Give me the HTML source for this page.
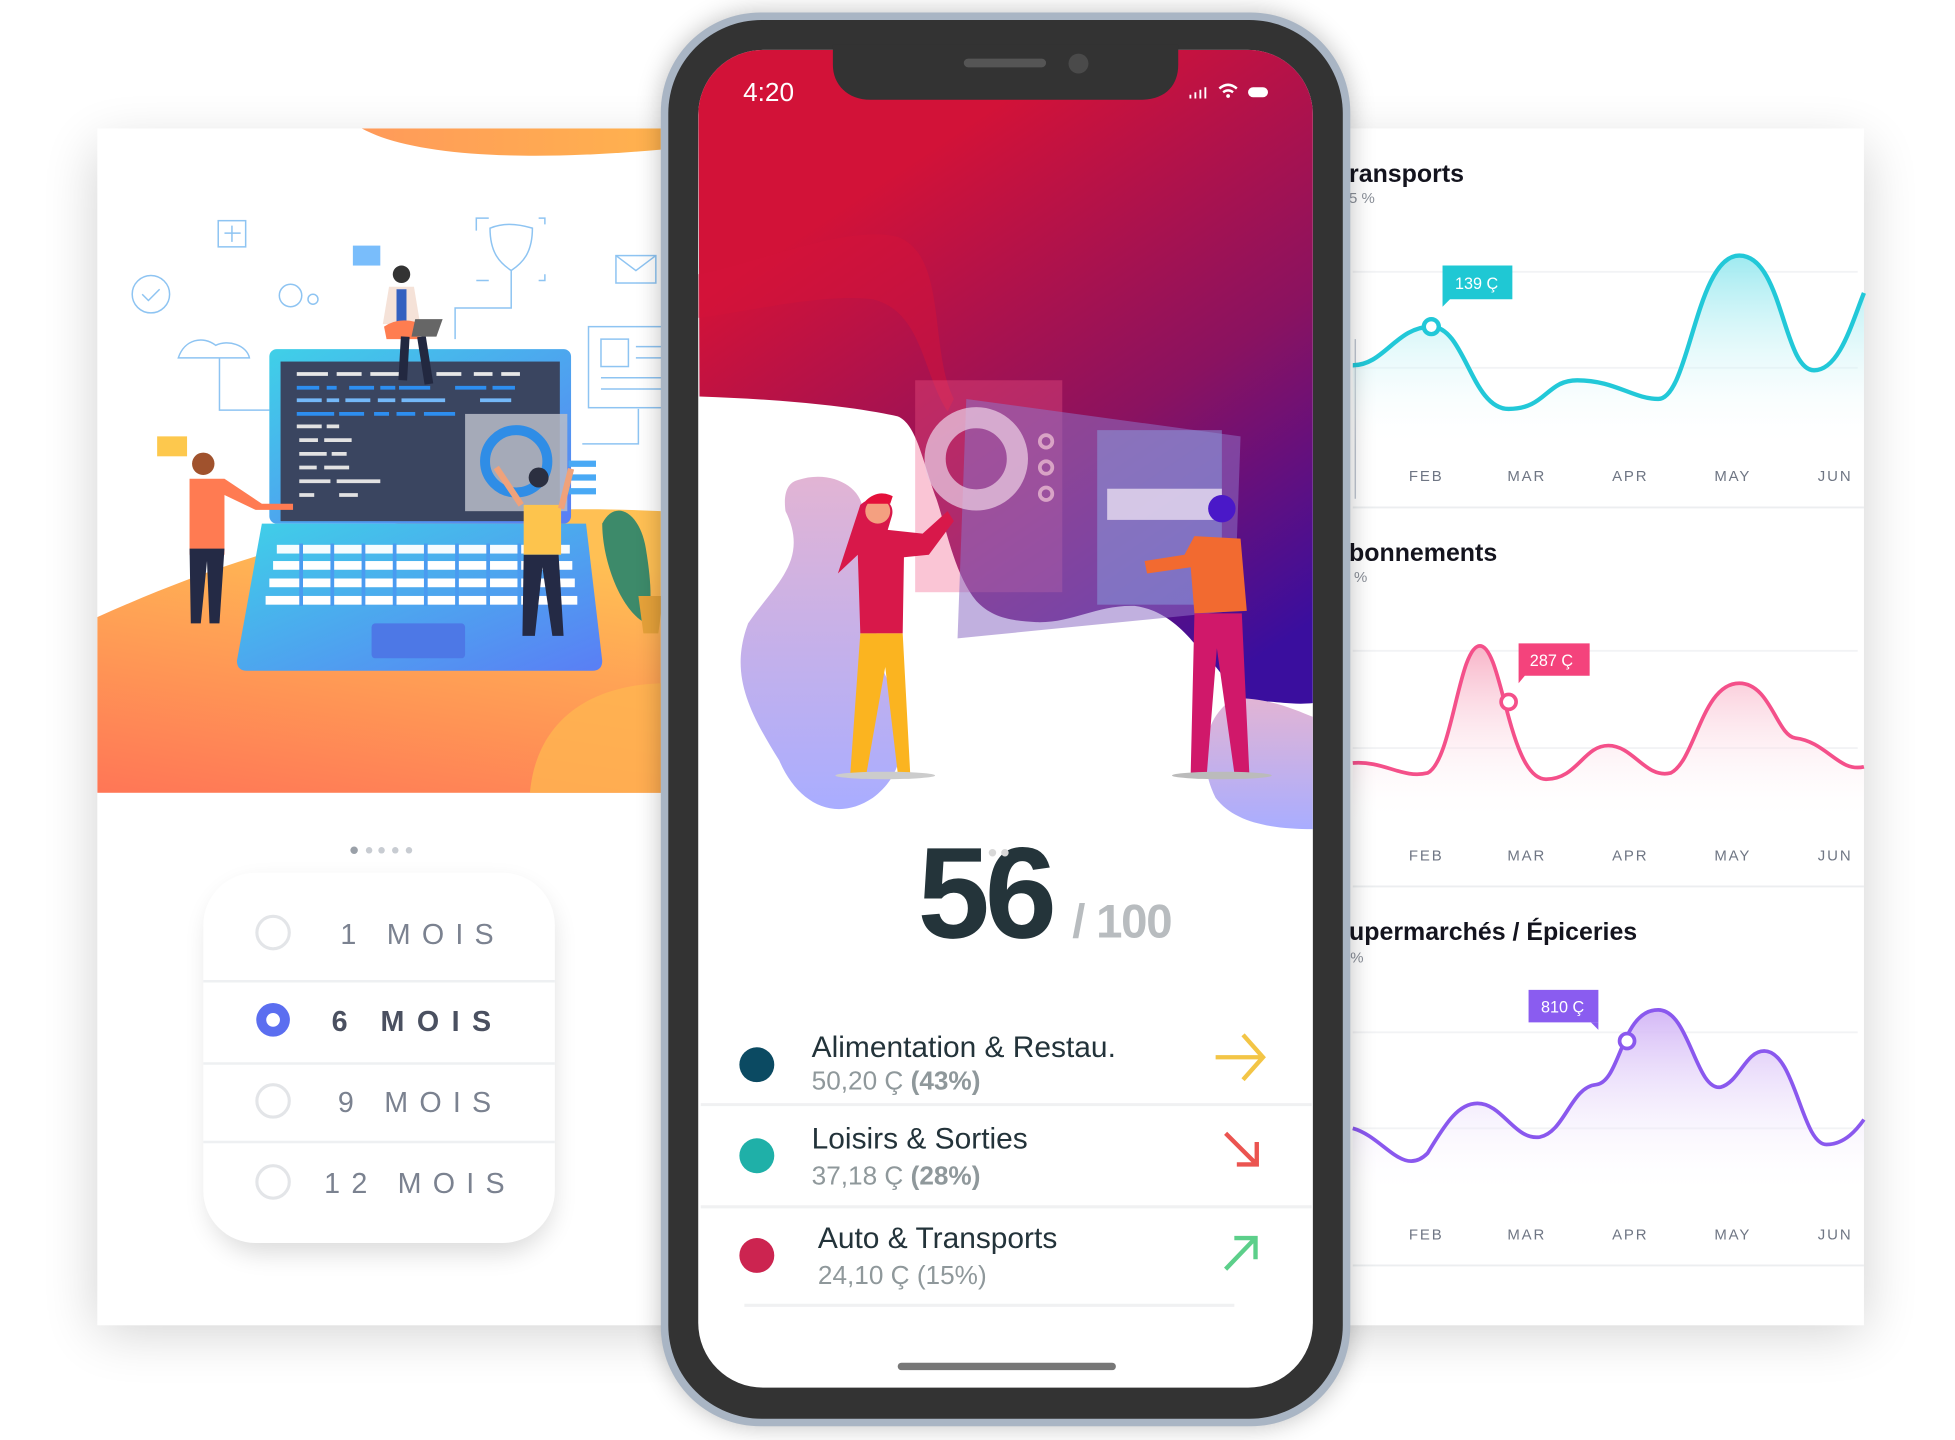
<!DOCTYPE html>
<html><head><meta charset="utf-8"><style>
html,body{margin:0;padding:0;background:#fff;width:1955px;height:1440px;overflow:hidden}
svg{display:block}
text{font-family:"Liberation Sans",sans-serif}
</style></head><body>
<svg width="1955" height="1440" viewBox="0 0 1568 1155" xmlns="http://www.w3.org/2000/svg">
<defs>
<filter id="sh" x="-10%" y="-10%" width="120%" height="125%"><feGaussianBlur stdDeviation="22"/></filter>
<filter id="sh2" x="-20%" y="-20%" width="140%" height="140%"><feGaussianBlur stdDeviation="10"/></filter>
<linearGradient id="org" x1="0" y1="1" x2="0.3" y2="0"><stop offset="0" stop-color="#ff7656"/><stop offset="1" stop-color="#ffc054"/></linearGradient>
<linearGradient id="org2" x1="0" y1="0" x2="1" y2="0"><stop offset="0" stop-color="#ff9a5a"/><stop offset="1" stop-color="#ffb24e"/></linearGradient>
<linearGradient id="lap" x1="0" y1="0" x2="1" y2="1"><stop offset="0" stop-color="#3fd0e8"/><stop offset="1" stop-color="#5a7ef5"/></linearGradient>
<linearGradient id="red" x1="0.3" y1="0.2" x2="0.8" y2="1"><stop offset="0" stop-color="#d21238"/><stop offset="0.55" stop-color="#8a1260"/><stop offset="1" stop-color="#3a0e9e"/></linearGradient>
<linearGradient id="lav" x1="0" y1="0" x2="0" y2="1"><stop offset="0" stop-color="#e2b4d4"/><stop offset="1" stop-color="#a9adff"/></linearGradient>
<linearGradient id="cy" x1="0" y1="0" x2="0" y2="1"><stop offset="0" stop-color="#9eeaf0"/><stop offset="1" stop-color="#ffffff" stop-opacity="0"/></linearGradient>
<linearGradient id="pk" x1="0" y1="0" x2="0" y2="1"><stop offset="0" stop-color="#f8b4c8"/><stop offset="1" stop-color="#ffffff" stop-opacity="0"/></linearGradient>
<linearGradient id="pu" x1="0" y1="0" x2="0" y2="1"><stop offset="0" stop-color="#d4b8f6"/><stop offset="1" stop-color="#ffffff" stop-opacity="0"/></linearGradient>
<clipPath id="scr"><rect x="560" y="40" width="493" height="1073" rx="52"/></clipPath>
<clipPath id="lft"><rect x="78" y="103" width="460" height="533"/></clipPath>
</defs>

<rect x="78" y="118" width="1417" height="950" fill="#000" opacity="0.18" filter="url(#sh)"/>
<rect x="78" y="103" width="1417" height="960" fill="#fff"/>

<g clip-path="url(#lft)">
<path d="M290,103 C330,125 420,130 530,120 V103 Z" fill="url(#org2)"/>
<path d="M78,495 C200,440 330,400 530,410 V636 H78 Z" fill="url(#org)"/>
<path d="M425,636 C430,580 470,550 530,548 V636 Z" fill="#ffb550" opacity="0.8"/>
<g fill="none" stroke="#8ec4f2" stroke-width="1.2">
<rect x="175" y="177" width="22" height="21"/><path d="M186,181 v13 M180,187 h13"/>
<circle cx="121" cy="236" r="15"/><path d="M114,236 l5,5 l9,-9"/>
<circle cx="233" cy="237" r="9"/><circle cx="251" cy="240" r="4"/>
<path d="M143,287 c5,-15 20,-18 30,-10 c10,-5 25,0 27,10 z"/><path d="M176,287 v42 h40"/>
<path d="M382,175 v50 h55 v-50 z" stroke-dasharray="10 40"/>
<path d="M393,183 c10,-4 20,-4 34,0 c0,20 -8,28 -17,34 c-9,-6 -17,-14 -17,-34 z"/><path d="M410,217 v30 h-45 v25"/>
<rect x="494" y="205" width="32" height="22"/><path d="M494,205 l16,12 l16,-12"/>
<rect x="472" y="262" width="70" height="65"/><rect x="482" y="272" width="22" height="22"/><path d="M482,303 h50 M482,312 h50 M510,278 h25 M510,287 h25"/>
<path d="M512,328 v28 h-45"/>
</g>
<rect x="283" y="197" width="22" height="16" fill="#79bdfb"/>
<rect x="126" y="350" width="24" height="16" fill="#fdc84d"/>
<rect x="216" y="280" width="242" height="140" rx="6" fill="url(#lap)"/>
<rect x="225" y="290" width="224" height="128" fill="#3a4560"/>
<g stroke-width="3">
<path d="M238,300h25M270,300h20M297,300h28M350,300h20M380,300h15M402,300h15" stroke="#e8e8e8"/>
<path d="M238,311h18M262,311h8M280,311h20M305,311h12M320,311h25M365,311h25M395,311h18" stroke="#2d8ef0"/>
<path d="M238,321h20M262,321h10M277,321h20M303,321h14M322,321h35M385,321h25" stroke="#74b8f8"/>
<path d="M238,332h30M272,332h20M300,332h12M318,332h15M340,332h25" stroke="#2d8ef0"/>
<path d="M238,342h20M262,342h10M240,353h15M260,353h22M240,364h22M266,364h12M240,375h14M260,375h20M240,386h25M270,386h35M240,397h12M272,397h15" stroke="#e2e2e2"/>
</g>
<rect x="373" y="332" width="82" height="78" fill="#b8bcc8" opacity="0.85"/>
<circle cx="414" cy="370" r="25" fill="none" stroke="#2f8de6" stroke-width="8"/>
<path d="M456,372h22M456,383h22M456,394h22" stroke="#49a9f5" stroke-width="5"/>
<path d="M210,420 H470 L483,530 Q483,538 475,538 H198 Q190,538 190,530 Z" fill="url(#lap)"/>
<g fill="#fff">
<rect x="222" y="437" width="235" height="7" opacity="0.95"/>
<rect x="219" y="450" width="240" height="7"/>
<rect x="216" y="464" width="245" height="7"/>
<rect x="213" y="478" width="250" height="7"/>
</g>
<g fill="#4a9bf0"><rect x="240" y="436" width="3" height="50"/><rect x="265" y="436" width="3" height="50"/><rect x="290" y="436" width="3" height="50"/><rect x="315" y="436" width="3" height="50"/><rect x="340" y="436" width="3" height="50"/><rect x="365" y="436" width="3" height="50"/><rect x="390" y="436" width="3" height="50"/><rect x="415" y="436" width="3" height="50"/><rect x="440" y="436" width="3" height="50"/></g>
<rect x="298" y="500" width="75" height="28" rx="3" fill="#4d78e6"/>
<path d="M152,384 h28 l30,20 h25 v5 h-30 l-25,-12 v48 h-28 z" fill="#ff7b52"/>
<circle cx="163" cy="372" r="9" fill="#a0522d"/>
<path d="M152,440 h28 l-4,60 h-8 l-2,-50 l-5,50 h-8 z" fill="#242a45"/>
<path d="M420,405 h30 v40 h-30 z" fill="#fdc44d"/><circle cx="432" cy="383" r="8" fill="#2b2f40"/>
<path d="M420,445 h28 l4,65 h-9 l-8,-55 l-6,55 h-10 z" fill="#242a45"/>
<path d="M418,405 l-20,-30 M450,408 l8,-32" stroke="#f0a27a" stroke-width="5"/>
<circle cx="322" cy="220" r="7" fill="#333"/><path d="M312,230 h20 l5,30 h-30 z" fill="#f5e2d8"/><path d="M318,232 h8 v26 h-8z" fill="#3360c0"/>
<path d="M308,262 q15,-10 35,0 l-8,10 h-25 z" fill="#ff7d50"/><path d="M325,270 l-2,35 M338,270 l6,38" stroke="#222840" stroke-width="7"/>
<path d="M330,270 l20,0 l5,-14 h-22 z" fill="#666"/>
<path d="M483,420 c10,-20 30,-10 35,20 c5,30 5,50 0,60 c-20,-10 -35,-50 -35,-80z" fill="#3d8a6a"/>
<path d="M512,478 h20 l-4,30 h-12 z" fill="#e6a23a"/>
</g>

<g fill="#c8ccd2"><circle cx="284" cy="682" r="3" fill="#9aa0a8"/><circle cx="296" cy="682" r="2.6"/><circle cx="306" cy="682" r="2.6"/><circle cx="317" cy="682" r="2.6"/><circle cx="328" cy="682" r="2.6"/></g>
<rect x="168" y="710" width="275" height="295" rx="42" fill="#000" opacity="0.14" filter="url(#sh2)"/>
<rect x="163" y="700" width="282" height="297" rx="42" fill="#fff"/>
<g stroke="#eef0f2" stroke-width="2"><path d="M163,787H445M163,853H445M163,916H445"/></g>
<g fill="none" stroke="#e3e5e8" stroke-width="2.5"><circle cx="219" cy="748" r="13"/><circle cx="219" cy="883" r="13"/><circle cx="219" cy="948" r="13"/></g>
<circle cx="219" cy="818" r="13.5" fill="#5b6ef0"/><circle cx="219" cy="818" r="5.5" fill="#fff"/>
<g font-size="23" fill="#7b8290" letter-spacing="9"><text x="273" y="757">1 MOIS</text><text x="271" y="892">9 MOIS</text><text x="260" y="957">12 MOIS</text></g>
<text x="266" y="827" font-size="23" font-weight="bold" fill="#4a5060" letter-spacing="10">6 MOIS</text>

<g fill="#14141e" font-size="20" font-weight="bold"><text x="1082" y="146">ransports</text><text x="1082" y="450">bonnements</text><text x="1082" y="754">upermarchés / Épiceries</text></g>
<g fill="#8a8f98" font-size="12"><text x="1082" y="163">5 %</text><text x="1086" y="467">%</text><text x="1083" y="772">%</text></g>
<g stroke="#f2f3f5" stroke-width="1.5"><path d="M1085,218H1490M1085,295H1490M1085,522H1490M1085,600H1490M1085,828H1490M1085,905H1490"/><path d="M1085,407H1495M1085,711H1495M1085,1015H1495" stroke="#eceef0"/></g>
<path d="M1087,272 V400" stroke="#b8c0cc" stroke-width="1"/>
<g font-size="12" fill="#6f7684" letter-spacing="1.5"><text x="1130" y="386">FEB</text><text x="1209" y="386">MAR</text><text x="1293" y="386">APR</text><text x="1375" y="386">MAY</text><text x="1458" y="386">JUN</text>
<text x="1130" y="690">FEB</text><text x="1209" y="690">MAR</text><text x="1293" y="690">APR</text><text x="1375" y="690">MAY</text><text x="1458" y="690">JUN</text>
<text x="1130" y="994">FEB</text><text x="1209" y="994">MAR</text><text x="1293" y="994">APR</text><text x="1375" y="994">MAY</text><text x="1458" y="994">JUN</text></g>
<path id="c1" d="M1085,293 C1110,293 1120,262 1148,262 C1175,262 1180,328 1210,328 C1240,328 1240,305 1265,305 C1295,305 1310,320 1330,320 C1355,320 1360,205 1395,205 C1430,205 1430,297 1455,297 C1475,297 1485,260 1495,235" fill="none"/>
<path d="M1085,293 C1110,293 1120,262 1148,262 C1175,262 1180,328 1210,328 C1240,328 1240,305 1265,305 C1295,305 1310,320 1330,320 C1355,320 1360,205 1395,205 C1430,205 1430,297 1455,297 C1475,297 1485,260 1495,235 V360 H1085Z" fill="url(#cy)"/>
<use href="#c1" stroke="#22c8d8" stroke-width="3.5"/>
<circle cx="1148" cy="262" r="6" fill="#fff" stroke="#22c8d8" stroke-width="3.5"/>
<path d="M1157,213 h56 v27 h-50 l-6,6 z" fill="#1fc8d4"/><text x="1167" y="232" font-size="13" fill="#fff">139 Ç</text>
<path d="M1085,612 C1110,610 1125,625 1145,620 C1165,610 1170,518 1187,518 C1205,518 1210,625 1240,625 C1265,625 1270,598 1290,598 C1310,598 1320,625 1340,620 C1360,610 1365,548 1395,548 C1420,548 1425,590 1440,592 C1465,595 1475,620 1495,615 V660 H1085Z" fill="url(#pk)"/>
<path d="M1085,612 C1110,610 1125,625 1145,620 C1165,610 1170,518 1187,518 C1205,518 1210,625 1240,625 C1265,625 1270,598 1290,598 C1310,598 1320,625 1340,620 C1360,610 1365,548 1395,548 C1420,548 1425,590 1440,592 C1465,595 1475,620 1495,615" fill="none" stroke="#f4508a" stroke-width="3"/>
<circle cx="1210" cy="563" r="6" fill="#fff" stroke="#f4508a" stroke-width="3"/>
<path d="M1218,516 h57 v26 h-52 l-5,6 z" fill="#f4437c"/><text x="1227" y="534" font-size="13" fill="#fff">287 Ç</text>
<path d="M1085,905 C1110,912 1125,945 1145,925 C1160,900 1170,885 1185,885 C1205,885 1215,915 1235,912 C1255,908 1260,872 1280,870 C1300,868 1300,810 1330,810 C1355,810 1360,875 1380,872 C1395,868 1400,843 1415,843 C1440,843 1445,918 1465,918 C1480,918 1490,905 1495,898 V960 H1085Z" fill="url(#pu)"/>
<path d="M1085,905 C1110,912 1125,945 1145,925 C1160,900 1170,885 1185,885 C1205,885 1215,915 1235,912 C1255,908 1260,872 1280,870 C1300,868 1300,810 1330,810 C1355,810 1360,875 1380,872 C1395,868 1400,843 1415,843 C1440,843 1445,918 1465,918 C1480,918 1490,905 1495,898" fill="none" stroke="#8a58ee" stroke-width="3"/>
<circle cx="1305" cy="835" r="6" fill="#fff" stroke="#8a58ee" stroke-width="3"/>
<path d="M1226,794 h56 v26 h-52 l-4,-0 z" fill="#8a5cf0"/><path d="M1276,820 l6,6 v-6z" fill="#8a5cf0"/><text x="1236" y="812" font-size="13" fill="#fff">810 Ç</text>

<rect x="530" y="10" width="553" height="1134" rx="80" fill="#000" opacity="0.25" filter="url(#sh2)"/>
<rect x="530" y="10" width="553" height="1134" rx="80" fill="#a9b5c4"/>
<rect x="536" y="16" width="541" height="1122" rx="75" fill="#333333"/>
<rect x="560" y="40" width="493" height="1073" rx="52" fill="#fff"/>
<g clip-path="url(#scr)">
<path d="M560,40 H1053 V564 C1030,566 1015,560 1005,564 C990,560 975,530 957,515 C940,495 925,488 910,486 C880,485 860,500 831,499 C810,498 795,495 783,482 C765,460 758,420 751,400 C740,370 735,340 720,334 C680,325 620,320 561,318 Z" fill="url(#red)"/>
<path d="M560,220 C610,210 680,180 720,190 C760,205 745,280 765,320 L760,330 C740,300 740,250 700,240 C660,235 600,250 560,255Z" fill="#d3123a" opacity="0.5"/>
<path d="M640,385 C670,375 700,395 690,420 C720,440 710,480 700,520 C720,560 740,610 700,640 C670,660 640,645 625,610 C600,570 585,540 600,500 C620,470 650,450 630,410 C628,395 632,387 640,385Z" fill="url(#lav)"/>
<path d="M990,560 C1020,560 1040,570 1053,575 V665 C1020,665 990,660 975,640 C960,610 965,575 990,560Z" fill="url(#lav)"/>
<rect x="734" y="305" width="118" height="170" fill="#f05a88" opacity="0.35"/>
<path d="M775,320 L995,350 L990,490 L768,512 Z" fill="#8e6fc4" opacity="0.55"/>
<rect x="880" y="345" width="100" height="140" fill="#8aa0e0" opacity="0.5"/>
<rect x="888" y="392" width="92" height="25" fill="#e8dcf0" opacity="0.8"/>
<circle cx="783" cy="368" r="33" fill="none" stroke="#e8c8e0" stroke-width="17" opacity="0.75"/>
<g fill="none" stroke="#e8b8d0" stroke-width="3" opacity="0.8"><circle cx="839" cy="354" r="5"/><circle cx="839" cy="375" r="5"/><circle cx="839" cy="396" r="5"/></g>
<path d="M690,405 C700,395 720,400 715,415 L712,425 L740,428 L760,410 L765,418 L745,445 L725,447 L724,508 L690,508 L688,445 L672,460 Z" fill="#d8184a"/>
<circle cx="704" cy="410" r="10" fill="#f4a080"/><path d="M694,402 q10,-10 22,-4 l-2,6 h-18z" fill="#e4103a"/>
<path d="M690,508 H724 L730,620 H720 L710,535 L695,620 H682 Z" fill="#fbb420"/>
<ellipse cx="710" cy="622" rx="40" ry="3" fill="#ccc"/>
<path d="M958,430 L995,432 L1000,490 L958,492 L955,455 L920,460 L918,450 L950,445 Z" fill="#f26a30"/>
<circle cx="980" cy="408" r="11" fill="#4a18c8"/>
<path d="M958,492 H996 L1002,620 H990 L976,520 L968,620 H955 Z" fill="#d0186a"/>
<ellipse cx="980" cy="622" rx="40" ry="3" fill="#bbb"/>
</g>
<path d="M668,36 H945 V52 C945,68 935,80 915,80 H698 C680,80 668,68 668,52 Z" fill="#333333"/>
<rect x="773" y="47" width="66" height="7" rx="3.5" fill="#555"/>
<circle cx="865" cy="51" r="8" fill="#4a4a4a"/>
<text x="596" y="81" font-size="21" fill="#fff">4:20</text>
<g fill="#fff"><rect x="954" y="76" width="1.5" height="3"/><rect x="958" y="74" width="1.5" height="5"/><rect x="962" y="72" width="1.5" height="7"/><rect x="966" y="70" width="1.5" height="9"/></g>
<path d="M978,71 q7,-6 14,0 M981,74 q4,-3 8,0" stroke="#fff" stroke-width="2" fill="none"/><circle cx="985" cy="77" r="1.5" fill="#fff"/>
<rect x="1001" y="70" width="16" height="8" rx="4" fill="#fff"/>

<text x="736" y="752" font-size="104" font-weight="bold" fill="#24343a" letter-spacing="-4">56</text>
<text x="860" y="752" font-size="38" font-weight="bold" fill="#b8bcbf" letter-spacing="-1">/ 100</text>
<g fill="#d8d8d8"><circle cx="796" cy="684" r="3"/><circle cx="806" cy="684" r="3"/></g>

<circle cx="607" cy="854" r="14" fill="#0b4a62"/>
<circle cx="607" cy="927" r="14" fill="#1fb0a8"/>
<circle cx="607" cy="1007" r="14" fill="#cc2450"/>
<g font-size="24" fill="#23333a"><text x="651" y="848">Alimentation &amp; Restau.</text><text x="651" y="921">Loisirs &amp; Sorties</text><text x="656" y="1001">Auto &amp; Transports</text></g>
<g font-size="21" fill="#8f989b"><text x="651" y="874">50,20 Ç <tspan font-weight="bold">(43%)</tspan></text><text x="651" y="950">37,18 Ç <tspan font-weight="bold">(28%)</tspan></text><text x="656" y="1030">24,10 Ç (15%)</text></g>
<g stroke="#f0f1f2" stroke-width="2.5"><path d="M562,886H1052M562,968H1052M597,1047H990"/></g>
<path d="M975,848 H1012 M997,830 L1013,848 L997,866" fill="none" stroke="#f3c546" stroke-width="3.5"/>
<path d="M983,909 L1007,933 M992,934 H1008 V916" fill="none" stroke="#eb5450" stroke-width="3.5"/>
<path d="M983,1018 L1006,994 M990,993 H1007 V1010" fill="none" stroke="#5ccf8a" stroke-width="3.5"/>
<rect x="720" y="1093" width="175" height="6" rx="3" fill="#777"/>
</svg>
</body></html>
